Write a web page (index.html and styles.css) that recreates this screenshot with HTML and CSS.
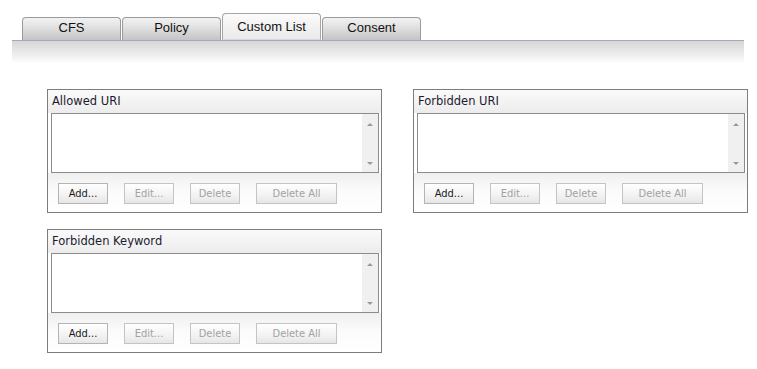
FILE: index.html
```html
<!DOCTYPE html>
<html>
<head>
<meta charset="utf-8">
<link rel="stylesheet" href="styles.css">
</head>
<body>
<div class="tabs">
  <div class="tab">CFS</div>
  <div class="tab">Policy</div>
  <div class="tab active">Custom List</div>
  <div class="tab">Consent</div>
</div>
<div class="bar"></div>
<div class="panels">
  <div class="panel">
    <div class="ptitle">Allowed URI</div>
    <div class="list"><div class="sb"><span class="up"></span><span class="down"></span></div></div>
    <div class="btns">
      <button class="btn">Add...</button>
      <button class="btn dis">Edit...</button>
      <button class="btn dis">Delete</button>
      <button class="btn dis wide">Delete All</button>
    </div>
  </div>
  <div class="panel">
    <div class="ptitle">Forbidden URI</div>
    <div class="list"><div class="sb"><span class="up"></span><span class="down"></span></div></div>
    <div class="btns">
      <button class="btn">Add...</button>
      <button class="btn dis">Edit...</button>
      <button class="btn dis">Delete</button>
      <button class="btn dis wide">Delete All</button>
    </div>
  </div>
  <div class="panel">
    <div class="ptitle">Forbidden Keyword</div>
    <div class="list"><div class="sb"><span class="up"></span><span class="down"></span></div></div>
    <div class="btns">
      <button class="btn">Add...</button>
      <button class="btn dis">Edit...</button>
      <button class="btn dis">Delete</button>
      <button class="btn dis wide">Delete All</button>
    </div>
  </div>
</div>
</body>
</html>
```
FILE: styles.css
```css
html, body { margin: 0; padding: 0; background: #fff; }
body { font-family: "DejaVu Sans", Verdana, sans-serif; font-size: 11px; color: #222; }

.tabs {
  display: flex;
  align-items: flex-end;
  gap: 1px;
  padding: 14px 0 0 22px;
  height: 26px;
}
.tab {
  width: 97px;
  height: 22px;
  border: 1px solid #9a9a9a;
  border-bottom: none;
  border-radius: 4px 4px 0 0;
  background: linear-gradient(#f2f2f2, #e2e2e2 40%, #c4c4c4);
  font-family: "Liberation Sans", Arial, sans-serif;
  font-size: 13px;
  color: #111;
  text-align: center;
  line-height: 19px;
  box-sizing: content-box;
}
.tab.active {
  height: 25px;
  line-height: 25px;
  border-color: #a6a6a6;
  background: linear-gradient(#fcfcfc, #f0f0f0 60%, #eaeaea);
  border-bottom: 1px solid #d8d6ea;
}
.bar {
  margin: 0 13px 0 12px;
  height: 23px;
  border-top: 1px solid #a9a5bf;
  background: linear-gradient(#d6d6d6, #ececec 55%, #ffffff);
}

.panels {
  display: grid;
  grid-template-columns: 335px 335px;
  column-gap: 31px;
  row-gap: 16px;
  padding: 25px 0 0 47px;
}
.panel {
  box-sizing: border-box;
  height: 124px;
  border: 1px solid #7c7c7c;
  display: flex;
  flex-direction: column;
}
.ptitle {
  height: 23px;
  line-height: 23px;
  padding-left: 4px;
  font-size: 11.5px;
  background: linear-gradient(#fafafa, #ececec);
  color: #1c1a30;
}
.list {
  box-sizing: border-box;
  height: 60px;
  margin: 0 2px 0 3px;
  border: 1px solid #8c8c8c;
  background: #fff;
  display: flex;
  justify-content: flex-end;
}
.sb {
  width: 16px;
  background: #f0f0f0;
  display: flex;
  flex-direction: column;
  justify-content: space-between;
  align-items: center;
  padding: 9px 0 7px;
}
.up, .down { width: 0; height: 0; border-left: 3px solid transparent; border-right: 3px solid transparent; }
.up { border-bottom: 3px solid #999; }
.down { border-top: 3px solid #999; }

.btns {
  flex: 1;
  display: flex;
  align-items: flex-start;
  padding: 10px 0 0 10px;
  gap: 16px;
  background: linear-gradient(#efefef, #fbfbfb 45%, #fff);
}
.btn {
  width: 50px;
  height: 21px;
  padding: 0;
  border: 1px solid #b4b4b4;
  border-radius: 0;
  background: linear-gradient(#ffffff, #f2f2f2 60%, #e6e6e6);
  font-family: "DejaVu Sans Condensed", "DejaVu Sans", Verdana, sans-serif;
  font-size: 11px;
  color: #1a1a1a;
}
.btn.dis { color: #a2a2a2; border-color: #c4c4c4; }
.btn.wide { width: 81px; }
```
